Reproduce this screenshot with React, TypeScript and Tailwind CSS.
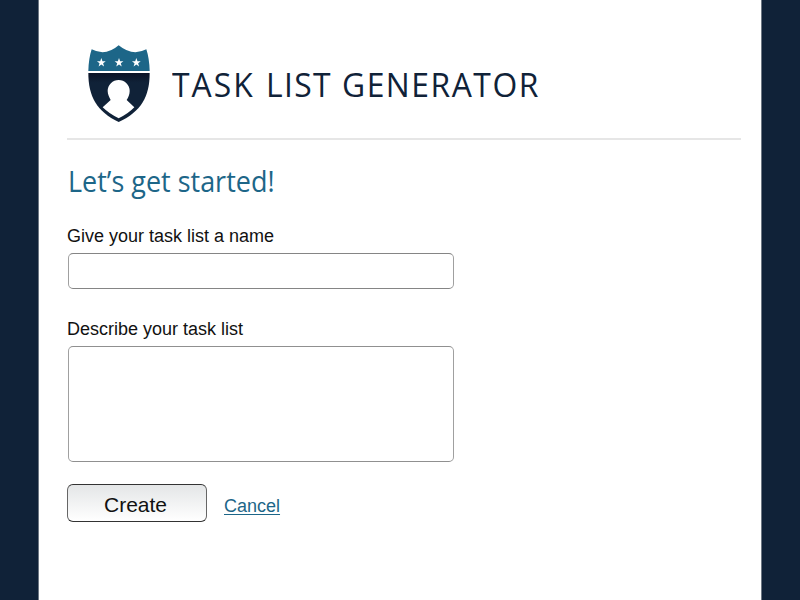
const STAR = "M0 -14 L3.4 -4.6 L13.2 -4.3 L5.4 1.8 L8.2 11.3 L0 5.8 L-8.2 11.3 L-5.4 1.8 L-13.2 -4.3 L-3.4 -4.6 Z";

function Shield() {
  return (
    <svg viewBox="36 27 192 237" className="block h-[79px] w-[64px] shrink-0">
      <defs>
        <linearGradient id="shield-body" x1="0" y1="0" x2="0" y2="1">
          <stop offset="0" stopColor="#0b1226" />
          <stop offset="0.2" stopColor="#102238" />
        </linearGradient>
      </defs>
      <path d="M50 43 Q92 65 131 31 Q172 65 214 43 Q223 70 224 108 H40 Q41 70 50 43 Z" fill="#1d6688" />
      <path d="M40 114 H224 C224 185 198 230 131 261 C66 230 40 185 40 114 Z" fill="url(#shield-body)" />
      <path
        d="M83 217 L107 195 C103 188 98 178 98 168 A33 33 0 0 1 164 168 C164 178 160 188 155 195 L178 217 Q160 236 131 250 Q102 236 83 217 Z"
        fill="#fff"
      />
      {[79, 132, 184].map((x) => (
        <path key={x} d={STAR} transform={`translate(${x} 83)`} fill="#fff" />
      ))}
    </svg>
  );
}

export default function App() {
  return (
    <div className="h-[600px] w-[800px] overflow-hidden bg-[#102238] pl-[38px] font-['Liberation_Sans',Arial,sans-serif] text-[#111]">
      <main className="h-full w-[724px] border-x border-[#6d7783] bg-white pl-7">
        <header className="flex h-[140px] w-[674px] items-start border-b-2 border-[#e6e6e6] pt-[44px] pl-5">
          <Shield />
          <h1 className="mt-[17px] ml-[21px] flex whitespace-nowrap font-['Open_Sans','Noto_Sans',sans-serif] text-[33.5px] leading-[46px] text-[#102238]">
            <span className="w-[94px] origin-left scale-x-[0.95] tracking-[2.2px]">TASK</span>
            <span className="w-[75.5px] origin-left scale-x-[0.95] tracking-[1.4px]">LIST</span>
            <span className="origin-left scale-x-[0.95] tracking-[1.6px]">GENERATOR</span>
          </h1>
        </header>
        <h2 className="mt-[21px] ml-px w-fit origin-left scale-x-[0.93] whitespace-nowrap font-['Open_Sans','Noto_Sans',sans-serif] text-[29px] leading-[40px] text-[#1d6688]">
          Let’s get started!
        </h2>
        <form className="flex flex-col items-start" onSubmit={(e) => e.preventDefault()}>
          <label htmlFor="name" className="mt-[25px] text-[18px] leading-[20px]">Give your task list a name</label>
          <input id="name" className="mt-[7px] ml-px h-[36px] w-[386px] rounded-[5px] border border-x-[#a0a0a0] border-y-[#858585] bg-white px-2 outline-none" />
          <label htmlFor="description" className="mt-[30px] text-[18px] leading-[20px]">Describe your task list</label>
          <textarea id="description" className="mt-[7px] ml-px h-[116px] w-[386px] resize-none rounded-[5px] border border-x-[#a0a0a0] border-y-[#909090] bg-white p-2 outline-none" />
          <div className="mt-[22px] flex items-start">
            <button className="h-[38px] w-[140px] rounded-[6px] border border-x-[#666] border-y-[#333] bg-linear-to-b from-[#e4e6e7] to-white pt-[3px] pr-[3px] text-[21px] leading-[33px]">
              Create
            </button>
            <a href="#" className="mt-[12px] ml-[17px] text-[18px] leading-[20px] text-[#1d6688] underline decoration-1 underline-offset-2">Cancel</a>
          </div>
        </form>
      </main>
    </div>
  );
}
